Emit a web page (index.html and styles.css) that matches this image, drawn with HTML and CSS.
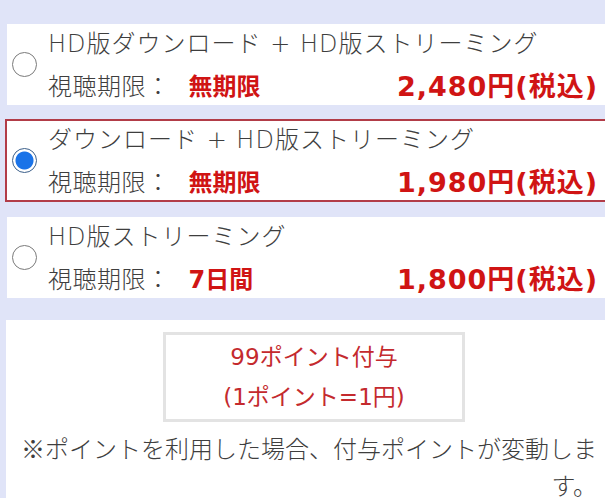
FILE: index.html
```html
<!DOCTYPE html>
<html lang="ja">
<head>
<meta charset="utf-8">
<link rel="stylesheet" href="styles.css">
</head>
<body>
<div class="page">
  <label class="plan">
    <input class="radio" type="radio" name="plan">
    <div class="info">
      <div class="title">HD版ダウンロード + HD版ストリーミング</div>
      <div class="row">
        <span class="label">視聴期限：</span>
        <span class="value">無期限</span>
        <span class="price">2,480円(税込)</span>
      </div>
    </div>
  </label>
  <label class="plan selected">
    <input class="radio" type="radio" name="plan" checked>
    <div class="info">
      <div class="title">ダウンロード + HD版ストリーミング</div>
      <div class="row">
        <span class="label">視聴期限：</span>
        <span class="value">無期限</span>
        <span class="price">1,980円(税込)</span>
      </div>
    </div>
  </label>
  <label class="plan">
    <input class="radio" type="radio" name="plan">
    <div class="info">
      <div class="title">HD版ストリーミング</div>
      <div class="row">
        <span class="label">視聴期限：</span>
        <span class="value">7日間</span>
        <span class="price">1,800円(税込)</span>
      </div>
    </div>
  </label>
  <div class="panel">
    <div class="points">
      <div>99ポイント付与</div>
      <div>(1ポイント=1円)</div>
    </div>
    <p class="note">※ポイントを利用した場合、付与ポイントが変動します。</p>
  </div>
</div>
</body>
</html>
```

FILE: styles.css
```css
html, body {
  margin: 0;
  padding: 0;
  overflow: hidden;
  background: #e0e4f8;
}
body {
  font-family: "Noto Sans CJK JP", "Noto Sans", sans-serif;
  color: #3e3e3e;
  font-size: 24px;
  font-weight: 300;
}
.page {
  display: flex;
  flex-direction: column;
  padding-top: 24px;
  width: 640px;
}
.plan {
  display: flex;
  align-items: center;
  background: #fff;
  margin-left: 7px;
  width: 613px;
  height: 81px;
  box-sizing: border-box;
  padding-right: 23px;
  margin-bottom: 14px;
}
.plan.selected {
  margin-left: 5px;
  width: 617px;
  height: 83px;
  border: 2px solid #b23c48;
  margin-bottom: 15px;
}
.radio {
  appearance: none;
  -webkit-appearance: none;
  width: 25px;
  height: 25px;
  margin: 0 11px 0 5px;
  border: 1px solid #7a7a7a;
  border-radius: 50%;
  background: #fff;
  box-sizing: border-box;
  flex: none;
}
.radio:checked {
  border-color: #3b5f8a;
  background: radial-gradient(circle, #1a73e8 0 8.5px, #fff 9.5px);
}
.info {
  flex: 1;
  display: flex;
  flex-direction: column;
}
.title {
  font-family: "DejaVu Sans", "Noto Sans CJK JP", sans-serif;
  line-height: 40px;
  height: 40px;
  white-space: nowrap;
  letter-spacing: 1px;
}
.row {
  display: flex;
  align-items: center;
  height: 41px;
}
.label {
  letter-spacing: 0.5px;
}
.value {
  font-family: "DejaVu Sans", "Noto Sans CJK JP", sans-serif;
  margin-left: 18px;
  color: #d01414;
  font-weight: 700;
}
.price {
  font-family: "DejaVu Sans", "Noto Sans CJK JP", sans-serif;
  margin-left: auto;
  margin-right: -1px;
  color: #d01414;
  font-weight: 700;
  font-size: 27px;
  letter-spacing: 1px;
}
.panel {
  margin-top: 8px;
  margin-left: 6px;
  width: 616px;
  background: #fff;
  padding: 12px 0 0;
  display: flex;
  flex-direction: column;
}
.points {
  font-family: "DejaVu Sans", "Noto Sans CJK JP", sans-serif;
  align-self: center;
  width: 302px;
  box-sizing: border-box;
  border: 3px solid #e3e3e3;
  padding: 2px 0;
  text-align: center;
  color: #c42a2e;
  font-weight: 400;
  font-size: 23px;
  line-height: 40px;
}
.note {
  margin: 7px 25px 0 12px;
  line-height: 37px;
  text-align: right;
  font-size: 24px;
}
```
